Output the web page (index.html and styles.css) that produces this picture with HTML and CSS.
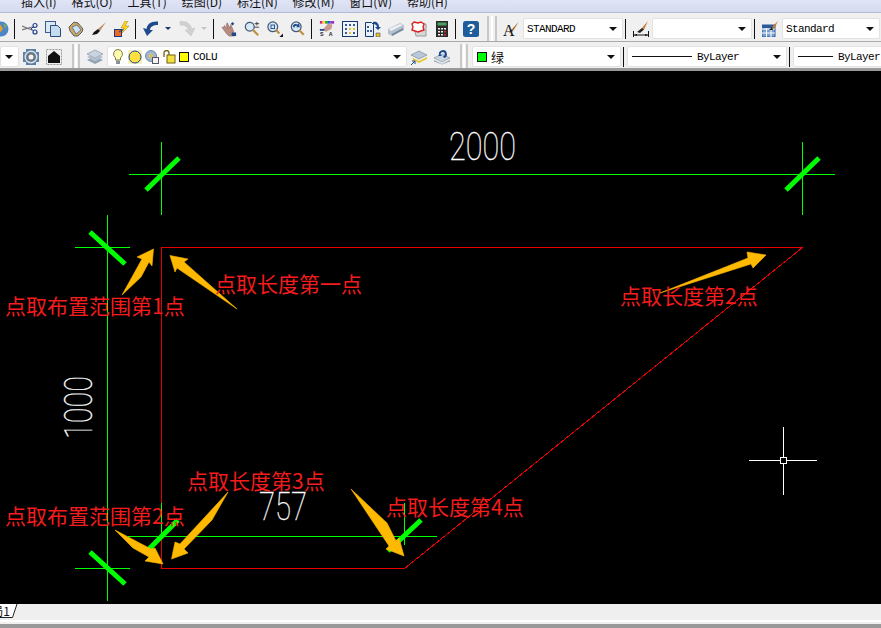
FILE: index.html
```html
<!DOCTYPE html>
<html lang="zh">

<head>
    <meta charset="UTF-8">
    <title>点取布置范围</title>
    <link rel="stylesheet" href="styles.css">
</head>

<body>
    <div class="menubar">
        <span>插入(I)</span><span>格式(O)</span><span>工具(T)</span><span>绘图(D)</span><span>标注(N)</span><span>修改(M)</span><span>窗口(W)</span><span>帮助(H)</span>
    </div>

    <div class="toolrow toolrow-top">
        <div class="btn btn-first"><svg viewBox="0 0 16 16"><circle cx="8" cy="8" r="7.5" fill="#4a86c8"/><path d="M3 3l5 1 2 4-4 5-3-4z" fill="#e0a030"/><path d="M10 2l4 3-2 3z" fill="#7ab060"/></svg></div>
        <div class="sep"></div>
        <div class="btn"><svg viewBox="0 0 16 16"><path d="M0 5l10 4M0 9l10-3" stroke="#777" stroke-width="1.3" fill="none"/><circle cx="13" cy="4.5" r="2" fill="none" stroke="#22408a" stroke-width="1.2"/><circle cx="13" cy="11" r="2" fill="none" stroke="#22408a" stroke-width="1.2"/><path d="M9 8l3-3M9 8l3 2" stroke="#22408a"/></svg></div>
        <div class="btn"><svg viewBox="0 0 16 16"><rect x="0.5" y="0.5" width="10" height="11" fill="#dbe8f5" stroke="#3a5a90"/><path d="M5.5 4.500h7l3 3v8h-10z" fill="#c4dcf0" stroke="#2a4a80"/></svg></div>
        <div class="btn"><svg viewBox="0 0 16 16"><path d="M1 6l5-5 4 1 5 6-1 3-4 4H6L2 10z" fill="#cda85a" stroke="#55606e"/><path d="M4 6l5-2 4 5-5 4z" fill="#cfe2f5" stroke="#6a7a90"/></svg></div>
        <div class="btn"><svg viewBox="0 0 16 16"><path d="M15 1l-8 7 2 2z" fill="#c09060"/><path d="M7 8l2 2-3 3-5 1 2-3z" fill="#111"/></svg></div>
        <div class="btn"><svg viewBox="0 0 16 16"><rect x="0.500" y="8.500" width="7" height="7" fill="#ee6a20" stroke="#1a3a80"/><path d="M5 11l5-3M7 9h3" stroke="#1a3a80"/><path d="M11 0L7 7h3L8 12l7-7h-4l3-5z" fill="#ffd820" stroke="#a08000" stroke-width=".5"/></svg></div>
        <div class="sep"></div>
        <div class="btn"><svg viewBox="0 0 16 16"><path d="M15 .5C8 0 4 3 3.500 8L0 7l4 8 6-6-3 0C7 6 10 4 15 4z" fill="#1c4a8c"/></svg></div>
        <div class="drop drop-on"></div>
        <div class="btn"><svg viewBox="0 0 16 16"><path d="M1 .5C8 0 12 3 12.500 8L16 7l-4 8-6-6 3 0C9 6 6 4 1 4z" fill="#d0d0d0" stroke="#c0c0c0" stroke-width=".5"/></svg></div>
        <div class="drop"></div>
        <div class="sep"></div>
        <div class="btn"><svg viewBox="0 0 18 18"><path d="M1 7l5 7 3 3h6l-1-6-3-7-1 4-3-6-1 2 1 5-3-4-1 2z" fill="#b88a80" stroke="#806058" stroke-width=".6"/><path d="M13 1l2 2-2 2-2-2zM12 13h5v4h-5z" fill="#1c4a8c"/></svg></div>
        <div class="btn"><svg viewBox="0 0 18 18"><circle cx="6.500" cy="6.500" r="5" fill="#d8e8f5" stroke="#455a78" stroke-width="1.400"/><path d="M10 10l6 6" stroke="#c09040" stroke-width="2.500"/><path d="M12 3h5M14.500 1v4M12 7h5" stroke="#222" stroke-width=".9"/></svg></div>
        <div class="btn"><svg viewBox="0 0 18 18"><circle cx="6.500" cy="6.500" r="5.500" fill="#d8e8f5" stroke="#455a78" stroke-width="1.400"/><rect x="4.500" y="4.500" width="4" height="4" fill="none" stroke="#1c4a8c"/><path d="M10 10l4 4" stroke="#c09040" stroke-width="2.500"/><path d="M18 14v4h-4z" fill="#111"/></svg></div>
        <div class="btn"><svg viewBox="0 0 18 18"><circle cx="7" cy="6.500" r="5.500" fill="#d8e8f5" stroke="#455a78" stroke-width="1.400"/><path d="M3 6c1-3 4-3 6-2l1-2 1 5-4 0 1-1.500C6 5 5 6 5 8z" fill="#1c4a8c"/><path d="M10.500 10.500l5 5" stroke="#c09040" stroke-width="2.500"/></svg></div>
        <div class="sep"></div>
        <div class="btn"><svg viewBox="0 0 18 18"><path d="M1 0h3v3H1z" fill="#e02080"/><path d="M4 0h3v3H4z" fill="#ffd820"/><path d="M7 0h3v3H7z" fill="#20a040"/><path d="M10 0h3v3h-3z" fill="#2060e0"/><path d="M13 0h4v3h-4z" fill="#a030c0"/><path d="M4 10l6-7 5 1-1 5-6 3z" fill="#c89a90"/><text x="1" y="17" class="tiny">S</text><text x="11" y="17" class="tiny">A</text><rect x="1" y="9" width="5" height="2" fill="#1c4a8c"/></svg></div>
        <div class="btn"><svg viewBox="0 0 16 16"><rect x="0.500" y="0.500" width="15" height="15" fill="#eef4fa" stroke="#16366e"/><path d="M3 3h2v2H3zM7 3h2v2H7zM11 3h2v2h-2zM3 7h2v2H3zM3 11h2v2H3zM11 11h2v2h-2z" fill="#3a5a90"/><path d="M7 7h2v2H7zM11 7h2v2h-2zM7 11h2v2H7z" fill="#e8c020"/></svg></div>
        <div class="btn"><svg viewBox="0 0 16 16"><path d="M0.500 1.500h6l2 2v12h-8z" fill="#e8f0f8" stroke="#16366e"/><path d="M2 5h2v2H2zM2 9h2v2H2zM5 9h2v2H5z" fill="#3a5a90"/><path d="M8 1c3-1 6 1 6 5l2 0-3 3-3-3h2c0-2-2-3-4-3z" fill="#1c4a8c"/><path d="M11 12h4v4h-4z" fill="#e8c020" stroke="#16366e" stroke-width=".5"/></svg></div>
        <div class="btn"><svg viewBox="0 0 16 16"><path d="M0 8l12-6 4 2v5L4 15 0 13z" fill="#b4c0cc"/><path d="M1 8l11-5 3 1L3 10z" fill="#eef2f6"/><path d="M4 13l11-6v2L4 15z" fill="#74889c"/></svg></div>
        <div class="btn"><svg viewBox="0 0 16 16"><path d="M2 3h13v12H5z" fill="#d8d8d8" stroke="#999"/><path d="M3 1l4 1 3-1 3 2-1 3 1 3-3 1-3 1-3-1-3-1 1-3-1-3z" fill="#fff" stroke="#e02020" stroke-width="1.400"/></svg></div>
        <div class="btn"><svg viewBox="0 0 16 16"><rect x="2" width="12" height="16" fill="#2a2a2a"/><rect x="3.500" y="1.500" width="9" height="3" fill="#4ca060"/><path d="M4 7h2v1.500H4zM7 7h2v1.500H7zM10 7h2v1.500h-2zM4 10h2v1.500H4zM7 10h2v1.500H7zM4 13h2v1.500H4zM7 13h2v1.500H7z" fill="#eee"/><path d="M10 10h2v1.500h-2zM10 13h2v1.500h-2z" fill="#e03020"/></svg></div>
        <div class="sep"></div>
        <div class="btn"><svg viewBox="0 0 16 16"><rect width="16" height="16" rx="2.500" fill="#1f5c9c"/><text x="8" y="13" class="help-mark">?</text></svg></div>
        <div class="grip grip-top"></div>
        <div class="btn btn-tight"><svg viewBox="0 0 16 16"><text x="0" y="15" class="style-a">A</text><path d="M15.500 1L9 8l1.500 1.500z" fill="#b07838"/><path d="M9 8l-3 4 4-2z" fill="#222"/></svg></div>
        <div class="combo combo-style"><span class="mono">STANDARD</span></div>
        <div class="sep"></div>
        <div class="btn"><svg viewBox="0 0 16 16"><path d="M0.500 10v6M15.500 10v6M1 14h14" stroke="#111"/><path d="M1 14l3-1v2zM15 14l-3-1v2z" fill="#111"/><path d="M15 0L9 7l2 1.500z" fill="#c87830"/><path d="M9 7l-5 4 3 1 4-3.500z" fill="#222"/></svg></div>
        <div class="combo combo-style"></div>
        <div class="sep"></div>
        <div class="btn"><svg viewBox="0 0 16 16"><rect y="4" width="13" height="12" fill="#7aa0d0" stroke="#2a5a98"/><path d="M0 8h13M0 12h13M4.500 4v12M9 4v12" stroke="#fff"/><path d="M0 4h13v3H0z" fill="#2a5a98"/><path d="M16 0l-6 6 2 2z" fill="#c87830"/><path d="M10 6l-3 3 4 0z" fill="#222"/></svg></div>
        <div class="combo combo-tstyle"><span class="mono">Standard</span></div>
    </div>

    <div class="toolrow toolrow-bottom">
        <div class="combo combo-clip"></div>
        <div class="btn"><svg viewBox="0 0 16 16"><rect width="16" height="16" fill="#5a80a8"/><circle cx="8" cy="8" r="6.500" fill="#dce4ec"/><circle cx="8" cy="8" r="5" fill="#6a7680"/><circle cx="8" cy="8" r="2.500" fill="#eef2f6"/><path d="M0 0h3v3H0zM13 0h3v3h-3zM0 13h3v3H0zM13 13h3v3h-3z" fill="#e8eef4"/></svg></div>
        <div class="btn"><svg viewBox="0 0 16 16"><rect x="0.500" y="0.500" width="15" height="15" fill="#f0f0f0" stroke="#999" stroke-dasharray="2 1"/><path d="M8 2l6 5v7H2V7z" fill="#111"/></svg></div>
        <div class="grip grip-layer"></div>
        <div class="btn btn-layer"><svg viewBox="0 0 16 16"><path d="M8 1l8 4-8 4-8-4z" fill="#c8d4e0" stroke="#7a8a9a" stroke-width=".6"/><path d="M0 8l8 4 8-4-3-1.500L8 9 3 6.500z" fill="#b0bcc8"/><path d="M0 11l8 4 8-4-3-1.500L8 12 3 9.500z" fill="#93a4b5"/></svg></div>
        <div class="combo combo-layer">
            <svg class="lyr lyr-bulb" viewBox="0 0 10 16"><path d="M5 .5a4.500 4.500 0 0 1 2.500 8.200V11h-5V8.700A4.500 4.500 0 0 1 5 .5z" fill="#fffbb0" stroke="#7a7a40"/><rect x="3" y="11.500" width="4" height="3.500" fill="#8a9098"/></svg>
            <svg class="lyr lyr-sun" viewBox="0 0 14 14"><rect width="14" height="14" fill="#f4f0c0"/><circle cx="7" cy="7" r="6" fill="#ffe040" stroke="#1c4a8c"/></svg>
            <svg class="lyr lyr-freeze" viewBox="0 0 14 14"><circle cx="6" cy="6" r="5.500" fill="#9ab8d8" stroke="#7a8a9a"/><circle cx="6" cy="6" r="2.500" fill="#d8c070"/><rect x="7.500" y="7.500" width="6" height="6" fill="#f4f4f4" stroke="#556"/></svg>
            <svg class="lyr lyr-lock" viewBox="0 0 14 14"><path d="M2 7V3a2.500 2.500 0 0 1 5 0v2" fill="none" stroke="#706010" stroke-width="1.300"/><rect x="5" y="5" width="8" height="8" fill="#f4e040" stroke="#706010"/></svg>
            <span class="swatch swatch-yellow"></span>
            <span class="mono">COLU</span>
        </div>
        <div class="btn"><svg viewBox="0 0 16 16"><path d="M8 2l8 4-8 4-8-4z" fill="#b8c8d8" stroke="#708090" stroke-width=".6"/><path d="M2 9l6 3 8-4v2l-8 4-6-3z" fill="#e8c830"/><path d="M0 16l4-4M1 12h3v3" stroke="#1c4a8c" fill="none"/></svg></div>
        <div class="btn"><svg viewBox="0 0 16 16"><path d="M8 5l8 4-8 4-8-4z" fill="#c8d4e0" stroke="#7a8a9a" stroke-width=".6"/><path d="M0 11l8 4 8-4v1.500l-8 3-8-3z" fill="#93a4b5"/><path d="M5 6a4 4 0 1 1 5 3l-1-2a2 2 0 1 0-2-1l1 1H4z" fill="#1c4a8c"/></svg></div>
        <div class="grip grip-color"></div>
        <div class="combo combo-color">
            <span class="swatch swatch-green"></span>
            <span class="cjk">绿</span>
        </div>
        <div class="sep"></div>
        <div class="combo combo-line">
            <span class="rule rule-long"></span>
            <span class="mono">ByLayer</span>
        </div>
        <div class="sep"></div>
        <div class="combo combo-weight">
            <span class="rule rule-short"></span>
            <span class="mono">ByLayer</span>
        </div>
    </div>

    <svg class="drawing" viewBox="0 71 881 533">
        <!-- outline -->
        <path class="red" d="M161.500 247.500H802.500L404.500 568.500H161.500Z"/>

        <!-- dimensions -->
        <g class="dim">
            <path d="M129 174.500H835M161.500 142V215M802.500 142V215"/>
            <path d="M107.500 215V601M75 247.500H130M75 568.500H130"/>
            <path d="M128 536.500H437M161.500 503V536M404.500 503V545"/>
        </g>
        <g class="tick">
            <path d="M146 190L179 158M786 190L819 158"/>
            <path d="M90 232L125 264M90 552L125 584"/>
            <path d="M148 550L178 520M388 551L421 520"/>
        </g>
        <text class="cad" x="449" y="159.500" textLength="67" lengthAdjust="spacingAndGlyphs">2000</text>
        <text class="cad" transform="translate(92 439) rotate(-90)" textLength="63" lengthAdjust="spacingAndGlyphs">1000</text>
        <text class="cad" x="259" y="520" textLength="48" lengthAdjust="spacingAndGlyphs">757</text>

        <!-- arrows -->
        <g class="arrow">
            <polygon points="122,295 142,259 137,257 153.500,249 152,266 149,262 141,277"/>
            <polygon points="237,309 184,262 188,259 170,255.500 175,272 177,268"/>
            <polygon points="660,293 748,258 747,252 766,255 753,268 751,264"/>
            <polygon points="228,492 180,544 175,542 171.500,559 188,553 184,549 212,520"/>
            <polygon points="115,530 151,549 155,548 163,564 145,561 149,557 133,548"/>
            <polygon points="351,489 387,523 396,541 399,538 404,556 386,549 389,546"/>
        </g>

        <!-- labels -->
        <g class="note">
            <text x="5" y="314">点取布置范围第1点</text>
            <text x="215" y="292">点取长度第一点</text>
            <text x="620" y="304">点取长度第2点</text>
            <text x="187" y="489">点取长度第3点</text>
            <text x="5" y="524">点取布置范围第2点</text>
            <text x="386" y="515">点取长度第4点</text>
        </g>

        <!-- cursor -->
        <path class="cursor" d="M749 460.500H817M783.500 427V495"/>
        <rect class="cursor-box" x="780.500" y="457.500" width="6" height="6"/>
    </svg>

    <div class="statusbar">
        <div class="tab">局1</div>
        <svg class="tab-edge" viewBox="0 0 8 14"><path d="M0 14h2.500L7 0H0z" fill="#fff"/><path d="M0 13.500h2.500L7 0" fill="none" stroke="#222"/></svg>
    </div>
</body>

</html>
```

FILE: styles.css
```css
* {
    box-sizing: border-box;
}

html,
body {
    height: 100%;
}

body {
    display: flex;
    flex-direction: column;
    height: 628px;
    margin: 0;
    overflow: hidden;
    background-color: #f0f0f0;
    font-family: "Liberation Mono", "Noto Sans CJK SC", monospace;
}

.menubar {
    display: flex;
    flex: none;
    gap: 14.900px;
    height: 13px;
    padding-left: 21px;
    overflow: hidden;
    background: linear-gradient(#dfe4f6, #d5daf0);
    border-bottom: 1px solid #b5bbd4;
    font: 12px/12px "Noto Sans CJK SC", sans-serif;
    color: #111;
}

.menubar span {
    margin-top: -4px;
}

.toolrow {
    display: flex;
    flex: none;
    align-items: center;
    height: 29px;
    overflow: hidden;
    background-color: #f0f0f0;
    border-bottom: 1px solid #aaa;
}

.toolrow-top {
    padding-top: 3px;
}

.toolrow-bottom {
    padding-top: 3px;
    border-bottom: 3px solid #999;
}

.btn {
    display: flex;
    flex: none;
    align-items: center;
    justify-content: center;
    width: 23px;
    height: 21px;
}

.btn svg {
    flex: none;
    width: 16px;
    height: 16px;
}

.btn-first {
    margin-left: -11px;
}

.btn-tight {
    margin-left: 2px;
}

.btn-layer {
    margin-left: 3px;
}

.drop {
    flex: none;
    width: 13px;
    height: 21px;
    position: relative;
}

.drop::after {
    content: "";
    position: absolute;
    left: 3px;
    top: 9px;
    border: 3px solid transparent;
    border-top: 3px solid #c4c4c4;
}

.drop-on::after {
    border-top-color: #16366e;
}

.sep {
    flex: none;
    width: 6px;
    height: 20px;
    background: linear-gradient(#111, #111) 2px 0 / 1px 100% no-repeat;
}

.grip {
    flex: none;
    height: 26px;
    border-left: 2px solid #c8c8c8;
    border-right: 2px solid #c8c8c8;
    background: linear-gradient(#fff, #fff) center / 2px 100% no-repeat;
}

.grip-top {
    width: 10px;
    margin-left: 5px;
}

.grip-layer {
    width: 8px;
    margin-left: 7px;
}

.grip-color {
    width: 8px;
    margin-left: 7px;
}

.combo {
    display: flex;
    flex: none;
    align-items: center;
    position: relative;
    height: 21px;
    background-color: #fff;
    border: 1px solid #e2e2e2;
    border-radius: 2px;
}

.combo::after {
    content: "";
    position: absolute;
    right: 5px;
    top: 8px;
    border: 4px solid transparent;
    border-top: 4px solid #111;
    border-bottom: 0;
}

.combo-style {
    width: 100px;
    padding-left: 3px;
}

.toolrow-top .btn-tight + .combo,
.combo-tstyle {
    margin-left: 1px;
}

.combo-tstyle {
    width: 98px;
    padding-left: 3px;
}

.combo-clip {
    width: 19px;
}

.combo-layer {
    width: 300px;
    margin-left: 1px;
    padding-left: 5px;
}

.combo-color {
    width: 149px;
    margin-left: 4px;
    padding-left: 4px;
}

.combo-line {
    width: 160px;
    padding-left: 4px;
}

.combo-weight {
    width: 94px;
    padding-left: 4px;
}

.combo-weight::after {
    display: none;
}

.mono {
    padding-top: 1px;
    font: 11px/12px "Liberation Mono", monospace;
    letter-spacing: -.6px;
    color: #000;
    white-space: nowrap;
}

.cjk {
    margin-left: 4px;
    font: 13px/14px "Noto Sans CJK SC", sans-serif;
    color: #111;
}

.lyr {
    flex: none;
    margin-right: 3px;
}

.lyr-bulb {
    width: 10px;
    height: 16px;
    margin-right: 5px;
}

.lyr-sun,
.lyr-freeze,
.lyr-lock {
    width: 14px;
    height: 14px;
}

.swatch {
    flex: none;
    width: 10px;
    height: 10px;
    margin-right: 4px;
    border: 1px solid #111;
}

.swatch-yellow {
    background-color: #ffff00;
}

.swatch-green {
    background-color: #00ff00;
    margin-right: 0;
}

.rule {
    flex: none;
    height: 1px;
    margin-right: 5px;
    background-color: #111;
}

.rule-long {
    width: 60px;
}

.rule-short {
    width: 35px;
}

.tiny {
    font: bold 6px "Liberation Sans", sans-serif;
    fill: #223;
}

.help-mark {
    font: bold 14px "Liberation Sans", sans-serif;
    fill: #fff;
    text-anchor: middle;
}

.style-a {
    font: 16px "Liberation Serif", serif;
    fill: #111;
}

.drawing {
    display: block;
    flex: none;
    width: 881px;
    height: 533px;
    background-color: #000;
}

.red {
    fill: none;
    stroke: #e80000;
    shape-rendering: crispEdges;
}

.dim path {
    fill: none;
    stroke: #00ff00;
    shape-rendering: crispEdges;
}

.tick path {
    fill: none;
    stroke: #00ff00;
    stroke-width: 5;
}

.cad {
    font: 100 38px Roboto, "Liberation Sans", sans-serif;
    fill: #fff;
    stroke: #fff;
    stroke-width: .3;
    opacity: .999;
}

.arrow polygon {
    fill: #ffb900;
    stroke: #ffb900;
    stroke-width: .6;
}

.note text {
    font: 400 21px "Noto Sans CJK SC", sans-serif;
    fill: #f41c1c;
}

.cursor {
    fill: none;
    stroke: #fff;
    shape-rendering: crispEdges;
}

.cursor-box {
    fill: #000;
    stroke: #fff;
    shape-rendering: crispEdges;
}

.statusbar {
    display: flex;
    flex: none;
    align-items: flex-start;
    height: 24px;
    background: linear-gradient(#efefef 16px, #fff 16px, #fff 18px, #f0f0f0 18px, #f0f0f0 20px, #999 20px);
}

.tab {
    width: 10px;
    height: 14px;
    padding-left: 2px;
    overflow: hidden;
    direction: rtl;
    background-color: #fff;
    border-bottom: 1px solid #222;
    font: 12px/13px "Noto Sans CJK SC", sans-serif;
    color: #111;
    white-space: nowrap;
}

.tab-edge {
    flex: none;
    width: 8px;
    height: 14px;
}
```
